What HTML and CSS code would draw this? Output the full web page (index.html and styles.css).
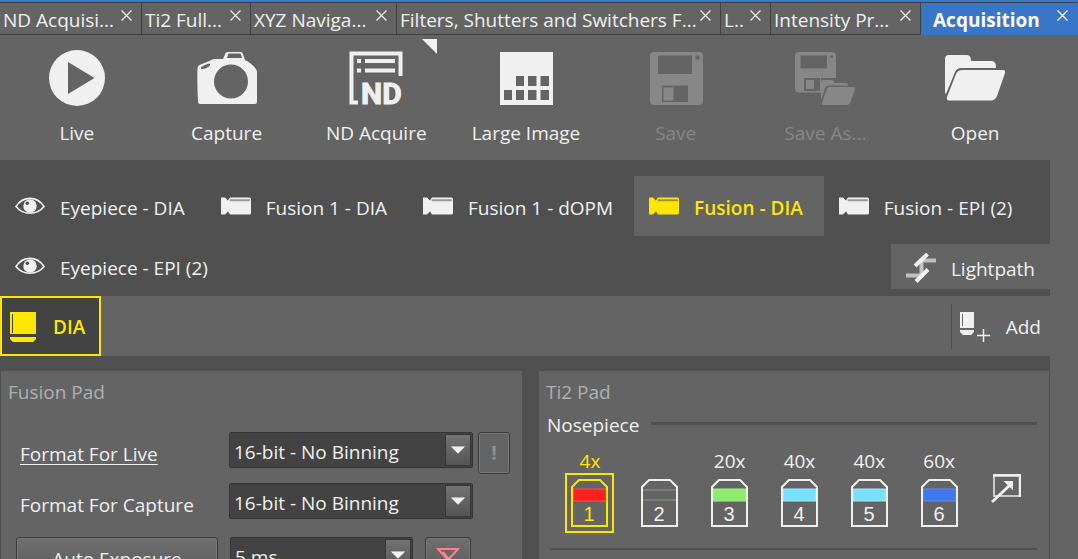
FILE: index.html
```html
<!DOCTYPE html>
<html lang="en">
<head>
<meta charset="utf-8">
<title>Acquisition</title>
<link rel="stylesheet" href="styles.css">
</head>
<body>
<svg class="defs" width="0" height="0" aria-hidden="true">
  <symbol id="close" viewBox="0 0 11 11"><path d="M.5 .5l10 10M10.500 .5l-10 10" fill="none" stroke="currentColor" stroke-width="1.300"/></symbol>
  <symbol id="eye" viewBox="0 0 30 30">
    <path d="M1 14.500C8 3.700 22 3.700 29 14.500C22 23.500 8 23.500 1 14.500z" fill="none" stroke="currentColor" stroke-width="1.600"/>
    <circle cx="15" cy="14" r="6.700" fill="currentColor"/><circle cx="12.300" cy="11.300" r="1.800" fill="#505050"/>
  </symbol>
  <symbol id="camera" viewBox="0 0 30 30">
    <path d="M0 5.500h4l2.800 3L9 5.500h19.500q1.500 0 1.500 1.500v14q0 1.500-1.500 1.500H9l-2-3-3 3H0z" fill="currentColor"/>
    <path d="M9.500 8.200H28" stroke="#505050" stroke-opacity=".55" stroke-width="2" stroke-linecap="round"/>
  </symbol>
  <symbol id="arrow" viewBox="0 0 16 8"><path d="M0 0h16l-8 8z" fill="#f0f0f0"/></symbol>
  <symbol id="objective" viewBox="0 0 37 48">
    <path d="M1 47V8l7-7h21l7 7v39z" fill="none" stroke="currentColor" stroke-width="2"/>
  </symbol>
</svg>

<nav class="tabs" aria-label="Panels">
  <div class="tab"><a href="#nd">ND Acquisi...</a><button aria-label="Close"><svg><use href="#close"/></svg></button></div>
  <div class="tab"><a href="#ti2">Ti2 Full...</a><button aria-label="Close"><svg><use href="#close"/></svg></button></div>
  <div class="tab"><a href="#xyz">XYZ Naviga...</a><button aria-label="Close"><svg><use href="#close"/></svg></button></div>
  <div class="tab"><a href="#filters">Filters, Shutters and Switchers F...</a><button aria-label="Close"><svg><use href="#close"/></svg></button></div>
  <div class="tab"><a href="#l">L..</a><button aria-label="Close"><svg><use href="#close"/></svg></button></div>
  <div class="tab"><a href="#intensity">Intensity Pr...</a><button aria-label="Close"><svg><use href="#close"/></svg></button></div>
  <div class="tab active"><a href="#acquisition">Acquisition</a><button aria-label="Close"><svg><use href="#close"/></svg></button></div>
</nav>

<main class="content">
  <div class="toolbar">
    <button class="tool">
      <svg viewBox="0 0 60 60"><path fill-rule="evenodd" fill="currentColor" d="M30 2a28 28 0 1 0 0 56a28 28 0 1 0 0-56zM21 14l26.500 16L21 46z"/></svg>
      <span>Live</span>
    </button>
    <button class="tool">
      <svg viewBox="0 0 60 60"><path fill-rule="evenodd" fill="currentColor" d="M24 11h2l2.500-6q.5-1 2-1h13q1.500 0 2 1l2.500 7q8 4 11.500 10 .5 1 .5 3v29q0 2-2 2H3q-2 0-2-2Q0 36 .5 20q0-2 2-3l11-4.500q1.500-1.500 4-1.500zM34 16.500a17 17 0 1 0 0 34a17 17 0 1 0 0-34zM31.500 5.500L30 10h15l-1.500-4.500zM5 18.500q-2 1.500-.5 2.500 5 0 8.500-3.500v-2q-4 .5-8 3z"/></svg>
      <span>Capture</span>
    </button>
    <button class="tool">
      <svg viewBox="0 0 60 60">
        <path d="M12 54.500H5.500V5.500h49V28" fill="none" stroke="currentColor" stroke-width="4"/>
        <path d="M11 13h4M19 13h30M11 22.500h4M19 22.500h30" fill="none" stroke="currentColor" stroke-width="4"/>
        <text class="nd" x="15" y="56">ND</text>
      </svg>
      <span>ND Acquire</span>
      <svg class="corner" viewBox="0 0 15 15"><path d="M0 0h15v15z" fill="currentColor"/></svg>
    </button>
    <button class="tool">
      <svg viewBox="0 0 60 60"><path fill-rule="evenodd" fill="currentColor" d="M4 4h53v53H4zM20 28v10h8V28zM32 28v10h8.500V28zM44.500 28v10H53V28zM8 42v10h8V42zM20 42v10h8V42zM32 42v10h8.500V42zM44.500 42v10H53V42z"/></svg>
      <span>Large Image</span>
    </button>
    <button class="tool" disabled>
      <svg viewBox="0 0 60 60"><path fill-rule="evenodd" fill="currentColor" d="M8 4h45q4 0 4 4v45q0 4-4 4H8q-4 0-4-4V8q0-4 4-4zM12 7.500v18.500h34V7.500zM49.500 7.500v4h4v-4zM16 37.500V54h26V37.500zM17.500 39.500H27.500v13H17.500z"/></svg>
      <span>Save</span>
    </button>
    <button class="tool" disabled>
      <svg viewBox="0 0 60 60">
        <path fill-rule="evenodd" fill="currentColor" d="M4 4h33q4 0 4 4v22H26v14.500H4q-4 0-4-4V8q0-4 4-4zM5.500 7.500v13h26.500v-13zM35.500 7.500v2.500h2.500V7.500zM9 30v13h16V30zM11 32h8v9h-8z"/>
        <path fill="currentColor" d="M26 34q0-2 2-2h9q2 0 2 3h12q2 0 2.500 2.500H34q-3 0-4 2.500l-4 12z"/>
        <path fill="currentColor" d="M34 39h24q2.500 0 2 2l-4.500 13q-1 3-4 3H28q-1.500 0-1-2l4.500-13q1-3 2.500-3z"/>
      </svg>
      <span>Save As...</span>
    </button>
    <button class="tool">
      <svg viewBox="0 0 60 60">
        <path fill="currentColor" d="M0 11q0-4 4-4h18q4 0 4 6h21q4 0 4 7H16q-4 0-6 4L1 46q-1 0-1-2z"/>
        <path fill="currentColor" d="M17 22h41q2.500 0 2 3l-8 23q-2 4.500-6 4.500H4q-3 0-2-3.500l9-23q2-4 6-4z"/>
      </svg>
      <span>Open</span>
    </button>
  </div>

  <div class="channels">
    <button class="channel"><svg><use href="#eye"/></svg>Eyepiece - DIA</button>
    <button class="channel"><svg><use href="#camera"/></svg>Fusion 1 - DIA</button>
    <button class="channel"><svg><use href="#camera"/></svg>Fusion 1 - dOPM</button>
    <button class="channel selected"><svg><use href="#camera"/></svg>Fusion - DIA</button>
    <button class="channel"><svg><use href="#camera"/></svg>Fusion - EPI (2)</button>
    <button class="channel"><svg><use href="#eye"/></svg>Eyepiece - EPI (2)</button>
    <button class="channel lightpath">
      <svg viewBox="0 0 30 30"><path d="M0 22.500h15.500v-15H30" fill="none" stroke="#c0c0c0" stroke-width="4"/><path d="M9 13L21.500 1M10 28.500L22 16.500" stroke="#f0f0f0" stroke-width="4"/></svg>Lightpath</button>
  </div>

  <div class="devices">
    <button class="device">
      <svg viewBox="0 0 30 30"><path fill="currentColor" d="M2 0h26v22H2zM2 25h26v2l-3 3H5l-3-3z"/><path d="M4.500 2v19" stroke="#434343"/></svg>DIA</button>
    <button class="add">
      <svg viewBox="0 0 30 30"><path fill="currentColor" d="M0 0h14v16H0zM0 18h14v2l-3 3H3l-3-3z"/><path d="M2.500 2v12" stroke="#646464"/><path d="M17 23.500h13M23.500 17v13" stroke="currentColor" stroke-width="1.500"/></svg>Add</button>
  </div>

  <div class="pads">
    <section class="pad">
      <h2>Fusion Pad</h2>
      <div class="settings">
        <label class="live" for="live">Format For Live</label>
        <div class="combo"><select id="live"><option>16-bit - No Binning</option></select><svg class="drop" viewBox="-5 -12 26 32"><use href="#arrow" width="16" height="8"/></svg></div>
        <button class="alert" disabled>!</button>
        <label for="capture">Format For Capture</label>
        <div class="combo"><select id="capture"><option>16-bit - No Binning</option></select><svg class="drop" viewBox="-5 -12 26 32"><use href="#arrow" width="16" height="8"/></svg></div>
      </div>
      <div class="exposure">
        <button class="auto">Auto Exposure</button>
        <div class="combo"><select aria-label="Exposure"><option>5 ms</option></select><svg class="drop" viewBox="-5 -12 26 32"><use href="#arrow" width="16" height="8"/></svg></div>
        <button class="reset" aria-label="Exposure filter"><svg viewBox="0 0 24 24"><path d="M2 2h20L12 13zM7 5l10 12M12 13v9" fill="none" stroke="#ff7f8c" stroke-width="2"/></svg></button>
      </div>
    </section>

    <section class="pad">
      <h2>Ti2 Pad</h2>
      <h3>Nosepiece</h3>
      <div class="nosepiece">
        <button class="lens selected"><span>4x</span><i><svg viewBox="0 0 37 48"><path class="red" d="M2 10h33v12H2z"/><use href="#objective"/><text x="18" y="42">1</text></svg></i></button>
        <button class="lens"><span></span><i><svg viewBox="0 0 37 48"><path class="none" d="M2 11h33M2 21h33"/><use href="#objective"/><text x="18" y="42">2</text></svg></i></button>
        <button class="lens"><span>20x</span><i><svg viewBox="0 0 37 48"><path class="green" d="M2 10h33v12H2z"/><use href="#objective"/><text x="18" y="42">3</text></svg></i></button>
        <button class="lens"><span>40x</span><i><svg viewBox="0 0 37 48"><path class="cyan" d="M2 10h33v12H2z"/><use href="#objective"/><text x="18" y="42">4</text></svg></i></button>
        <button class="lens"><span>40x</span><i><svg viewBox="0 0 37 48"><path class="cyan" d="M2 10h33v12H2z"/><use href="#objective"/><text x="18" y="42">5</text></svg></i></button>
        <button class="lens"><span>60x</span><i><svg viewBox="0 0 37 48"><path class="blue" d="M2 10h33v12H2z"/><use href="#objective"/><text x="18" y="42">6</text></svg></i></button>
        <button class="expand" aria-label="Expand"><svg viewBox="0 0 30 30"><path d="M3 1h26v21H3z" fill="none" stroke="#c8cccc" stroke-width="2"/><path d="M2 1.500h28M29 0v23" stroke="#f0f0f0" stroke-width="2.500"/><path d="M1 28L19 11" stroke="#f0f0f0" stroke-width="3"/><path d="M12.500 7H22v9.500z" fill="#f0f0f0"/></svg></button>
      </div>
    </section>
  </div>
</main>
</body>
</html>
```
FILE: styles.css
```css
* { box-sizing: border-box; }
html { height: 100%; }
body {
  margin: 0;
  height: 100%;
  overflow: hidden;
  display: flex;
  flex-direction: column;
  background: #646464;
  color: #f0f0f0;
  font: 19px/26px "Open Sans", "Noto Sans", sans-serif;
}
button, select {
  margin: 0;
  padding: 0;
  border: 0;
  background: none;
  color: inherit;
  font: inherit;
}
svg { display: block; flex: none; }
.defs { position: absolute; }

.tabs {
  display: grid;
  grid-template-columns: 142fr 109fr 146fr 324fr 50fr 150fr 157fr;
  height: 35px;
  border-top: 2px solid #3d78c8;
  flex: none;
}
.tab {
  display: flex;
  justify-content: space-between;
  min-width: 0;
  padding: 4px 9px 0 3px;
  border: solid #404040;
  border-width: 1px 1px 1px 0;
}
.tab a { color: inherit; text-decoration: none; white-space: nowrap; }
.tab button { height: 11px; margin-top: 3px; }
.tab svg { width: 11px; height: 11px; }
.tab.active {
  padding-left: 12px;
  background: #3a76c8;
  border-color: #404040 #3a76c8 #3a76c8;
  color: #fff;
  font-weight: 700;
}

.content {
  flex: 1;
  min-height: 0;
  margin-right: 28px;
  display: flex;
  flex-direction: column;
  background: #505050;
}
.toolbar {
  display: grid;
  grid-template-columns: repeat(7, 1fr);
  flex: none;
  height: 125px;
  padding: 13px 0 0 2px;
  background: #646464;
}
.tool {
  position: relative;
  display: flex;
  flex-direction: column;
  align-items: center;
  gap: 12px;
}
.tool > svg { width: 60px; height: 60px; }
.tool:disabled { color: #878787; }
.tool > .corner { position: absolute; top: -9px; right: 14px; width: 15px; height: 15px; }
.nd { font: bold 30px Roboto, "Liberation Sans", sans-serif; fill: currentColor; stroke: currentColor; }

.channels { display: flex; flex-wrap: wrap; flex: none; padding-top: 16px; }
.channel {
  display: flex;
  align-items: center;
  gap: 15px;
  height: 60px;
  padding: 4px 21px 0 15px;
  white-space: nowrap;
}
.channel svg, .device svg, .add svg { width: 30px; height: 30px; }
.channel svg { margin-top: -2px; }
.channel.selected { background: #646464; color: #ffe600; font-weight: 600; }
.channel.lightpath {
  height: 45px;
  margin: 8px 0 0 auto;
  padding: 4px 15px 0;
  background: #646464;
}

.devices { display: flex; justify-content: space-between; flex: none; height: 60px; background: #646464; }
.device {
  display: flex;
  align-items: center;
  gap: 15px;
  padding: 2px 14px 0 6px;
  border: 2px solid #ffe600;
  background: #434343;
  color: #ffe600;
  font-weight: 600;
}
.add {
  display: flex;
  align-items: center;
  gap: 16px;
  margin: 8px 0 7px;
  padding: 0 9px 0 8px;
  border-left: 1px solid #505050;
}

.pads {
  flex: 1;
  min-height: 0;
  display: grid;
  grid-template-columns: 521fr 510fr;
  gap: 17px;
  padding: 15px 1px 0;
}
.pad { min-width: 0; background: #646464; }
h2, h3 { margin: 0; font-size: 19px; font-weight: 400; }
h2 { padding: 8px 7px 0; color: #b0b0b0; }
.settings {
  display: grid;
  grid-template-columns: 208px 244px 32px;
  column-gap: 5px;
  row-gap: 9px;
  align-items: start;
  padding: 27px 0 0 15px;
}
.settings label { padding: 9px 4px 0; }
.settings .live { text-decoration: underline; text-underline-offset: 3px; }
.combo { position: relative; height: 36px; }
.combo select {
  appearance: none;
  width: 100%;
  height: 36px;
  padding: 4px 30px 0 4px;
  border: 1px solid #353535;
  border-radius: 2px;
  background: #434343;
}
.drop {
  position: absolute;
  top: 2px;
  right: 2px;
  width: 26px;
  height: 32px;
  border: 1px solid #353535;
  background: linear-gradient(#737373, #555);
  pointer-events: none;
}
.alert, .auto, .reset {
  border: 1px solid #3c3c3c;
  border-radius: 3px;
  box-shadow: inset 0 0 0 1px #777;
}
.alert { height: 42px; color: #929292; font-weight: 700; }
.exposure {
  display: grid;
  grid-template-columns: 202px 183px 46px;
  column-gap: 12px;
  align-items: start;
  padding: 18px 0 0 15px;
}
.auto, .reset { height: 44px; background: linear-gradient(#6f6f6f, #5a5a5a); }
.reset svg { width: 24px; height: 24px; margin: 0 auto; }

h3 { display: flex; align-items: center; gap: 12px; padding: 7px 12px 0 8px; }
h3::after { content: ""; flex: 1; height: 3px; margin-top: -3px; background: #505050; }
.nosepiece {
  display: grid;
  grid-template-columns: repeat(6, 70fr) 63fr;
  margin: 0 12px;
  padding: 10px 0 15px 4px;
  border-bottom: 2px solid #505050;
}
.lens { display: flex; flex-direction: column; align-items: center; }
.lens span { height: 25px; }
.lens i { padding: 4px; border: 2px solid transparent; font-style: normal; }
.lens svg { width: 37px; height: 48px; }
.lens text { font: 20px "Liberation Sans", sans-serif; text-anchor: middle; fill: currentColor; }
.lens.selected { color: #ffe600; }
.lens.selected i { border-color: #ffe600; }
.red { fill: #ff2020; stroke: #ff5050; }
.green { fill: #8cea6c; stroke: #a4f088; }
.cyan { fill: #78e0ff; stroke: #a4e8ff; }
.blue { fill: #4078ee; stroke: #5c8cf4; }
.none { stroke: #7c7c7c; stroke-width: 2; }
.expand { display: grid; justify-items: center; align-items: start; padding-top: 26px; }
.expand svg { width: 30px; height: 30px; }
```
